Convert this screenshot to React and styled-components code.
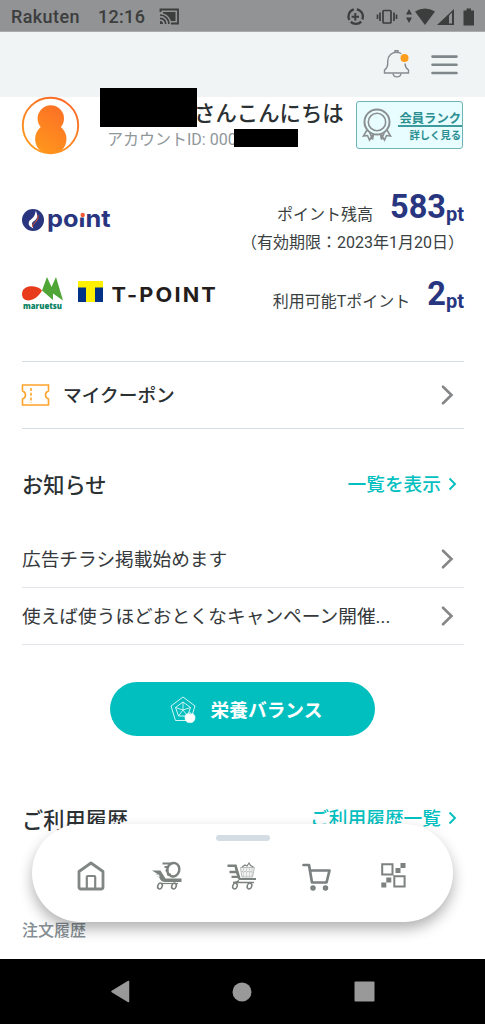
import React from 'react';
import styled, { createGlobalStyle } from 'styled-components';

const GlobalStyle = createGlobalStyle`
  * {
    box-sizing: border-box;
  }
  body {
    margin: 0;
    background: #fff;
    color: #2b3033;
    font-family: Roboto, "Noto Sans CJK JP", sans-serif;
  }
  svg {
    display: block;
    flex: none;
    overflow: visible;
  }
`;

const Screen = styled.div`
  width: 485px;
  height: 1024px;
  display: flex;
  flex-direction: column;
  overflow: hidden;
`;

const StatusBar = styled.div`
  height: 32px;
  flex: none;
  display: flex;
  align-items: center;
  padding: 2px 8px 0 11px;
  background: #929395;
  border-bottom: 1px solid #a9acad;
  color: #3c3d3d;
  font-size: 18px;
  font-weight: 500;
`;

const Carrier = styled.span`
  width: 87px;
  letter-spacing: 0.4px;
`;

const Clock = styled.span`
  flex: 1;
  display: flex;
  align-items: center;
  gap: 14px;
  letter-spacing: 0.3px;
`;

const Header = styled.header`
  height: 65px;
  flex: none;
  display: flex;
  align-items: center;
  justify-content: flex-end;
  gap: 20px;
  padding-right: 27px;
  background: #f0f4f5;
`;

const Main = styled.main`
  flex: 1;
  min-height: 0;
  padding: 0 21px 0 22px;
`;

const User = styled.section`
  height: 58px;
  display: flex;
`;

const UserText = styled.div`
  flex: 1;
  padding-left: 21px;
`;

const Greeting = styled.div`
  position: relative;
  height: 33px;
  padding-left: 94px;
  font-size: 21.4px;
  line-height: 33px;
  font-weight: 500;
  white-space: nowrap;
`;

const Account = styled.div`
  display: flex;
  align-items: center;
  height: 18px;
  padding-left: 7px;
  font-size: 16px;
  line-height: 20px;
  color: #90979b;
  white-space: nowrap;
`;

const AccountText = styled.span`
  padding-top: 2px;
`;

const NameMask = styled.span`
  position: absolute;
  left: 0;
  top: -9px;
  width: 97px;
  height: 39px;
  background: #000;
`;

const IdMask = styled.span`
  width: 64px;
  height: 18px;
  margin: -2px 0 0 -3px;
  background: #000;
  z-index: 1;
`;

const Rank = styled.div`
  width: 107px;
  height: 48px;
  margin: 4px 1px 0 -1px;
  display: flex;
  align-items: center;
  padding-left: 5px;
  background: #e7fdff;
  border: 1px solid #6fb3b6;
  border-radius: 3px;
  color: #2b8f92;
  font-weight: 700;
`;

const RankText = styled.div`
  width: 64px;
  margin-left: 6px;
  text-align: right;
  white-space: nowrap;
`;

const RankTitle = styled.div`
  height: 19px;
  padding-right: 1px;
  font-size: 12.3px;
  line-height: 22px;
  border-bottom: 2px solid #3d9b9d;
  margin-top: 2px;
`;

const RankLink = styled.div`
  height: 17px;
  padding-right: 1px;
  font-size: 10.3px;
  line-height: 17px;
`;

const Points = styled.section`
  height: 206px;
  padding-top: 32px;
`;

const PointRow = styled.div`
  height: ${(p) => p.$height}px;
  display: flex;
  justify-content: space-between;
  align-items: flex-start;
`;

const Logos = styled.div`
  display: flex;
  align-items: center;
  gap: 15px;
  padding-top: ${(p) => p.$top}px;
`;

const Balance = styled.div`
  display: flex;
  align-items: baseline;
  height: 40px;
  line-height: 40px;
`;

const Label = styled.span`
  font-size: 16px;
  color: #3a3f42;
  position: relative;
  top: 2px;
`;

const Amount = styled.span`
  margin-left: 17px;
  font-size: 32.5px;
  font-weight: 700;
  color: #28367f;
`;

const Unit = styled.span`
  position: relative;
  top: 3px;
  font-size: 20px;
  font-weight: 700;
  color: #28367f;
`;

const Expiry = styled.div`
  height: 43px;
  font-size: 16px;
  line-height: 24px;
  text-align: right;
  color: #3a3f42;
`;

const Coupon = styled.section`
  height: 68px;
  display: flex;
  align-items: center;
  padding-right: 10px;
  border-top: 1px solid #d3dfe5;
  border-bottom: 1px solid #d3dfe5;
  font-size: 18.7px;
  font-weight: 500;
`;

const CouponTitle = styled.span`
  flex: 1;
  padding: 0 0 4px 13px;
`;

const SectionHead = styled.div`
  height: ${(p) => p.$height}px;
  display: flex;
  justify-content: space-between;
  align-items: center;
  padding-top: ${(p) => p.$top || 0}px;
`;

const Title = styled.h2`
  margin: 0;
  font-size: 21.2px;
  font-weight: 500;
`;

const More = styled.a`
  display: flex;
  align-items: center;
  gap: 7px;
  padding-right: 7px;
  font-size: 18.7px;
  font-weight: 500;
  color: #04bfbf;
`;

const MoreText = styled.span`
  padding-bottom: 3px;
`;

const NewsRow = styled.div`
  height: 57px;
  display: flex;
  justify-content: space-between;
  align-items: center;
  padding-right: 10px;
  border-bottom: 1px solid #e2e6ea;
  font-size: 18.7px;
  color: #36393b;
`;

const NewsText = styled.span`
  padding-bottom: 3px;
`;

const NutritionButton = styled.button`
  width: 265px;
  height: 54px;
  margin: 37px auto 0 88px;
  padding: 1px 0 0 7px;
  display: flex;
  align-items: center;
  justify-content: center;
  gap: 14px;
  border: 0;
  border-radius: 27px;
  background: #02bfbf;
  color: #fff;
  font: inherit;
  font-size: 18.7px;
  font-weight: 700;
`;

const ButtonText = styled.span`
  padding-bottom: 3px;
`;

const History = styled.section`
  padding-top: 54px;
`;

const SubTitle = styled.div`
  margin-top: 73px;
  font-size: 16px;
  line-height: 24px;
  font-weight: 500;
  color: #858e93;
`;

const Dock = styled.nav`
  position: absolute;
  left: 32px;
  top: 824px;
  width: 421px;
  height: 98px;
  border-radius: 49px;
  background: #fff;
  box-shadow: 0 7px 14px rgba(0, 0, 0, 0.3);
`;

const Handle = styled.div`
  width: 54px;
  height: 6px;
  margin: 11px auto 0;
  border-radius: 3px;
  background: #d4dde3;
`;

const DockIcons = styled.div`
  display: grid;
  grid-template-columns: repeat(5, 75.5px);
  justify-content: center;
  justify-items: center;
  align-items: center;
  height: 69px;
  padding-right: 1px;
`;

const SystemNav = styled.div`
  height: 65px;
  flex: none;
  display: grid;
  grid-template-columns: repeat(3, 122px);
  justify-content: center;
  justify-items: center;
  align-items: center;
  padding-right: 1px;
  background: #000;
`;

const Chevron = ({ small }) =>
  small ? (
    <svg width="9" height="14" viewBox="0 0 9 14" fill="none" stroke="#04bfbf" strokeWidth="1.900">
      <path d="M1.500 1.500 7 7l-5.500 5.500" />
    </svg>
  ) : (
    <svg width="13" height="20" viewBox="0 0 13 20" fill="none" stroke="#848687" strokeWidth="2.600" strokeLinecap="round">
      <path d="m2 1.700 8.500 8.300-8.500 8.300" />
    </svg>
  );

const CastIcon = () => (
  <svg width="21" height="17" viewBox="0 0 21 17" fill="none" stroke="#3c3d3d">
    <path d="M1.500 4V1.500h17.500v14H12" strokeWidth="1.800" />
    <path d="M4 4h12.500v9H12C10 8 7 6 4 5.500Z" fill="#3c3d3d" stroke="none" />
    <path d="M1 7a9 9 0 0 1 9 9M1 10.300A5.700 5.700 0 0 1 6.700 16" strokeWidth="1.700" />
    <path d="M1 13a3 3 0 0 1 3 3H1Z" fill="#3c3d3d" stroke="none" />
  </svg>
);

const StatusIcons = () => (
  <svg width="131" height="20" viewBox="0 0 131 20" fill="#3c3d3d" stroke="none">
    <g fill="none" stroke="#3c3d3d" strokeWidth="2.300">
      <path d="M7.800 2.400A7.400 7.400 0 0 0 3.300 13M4.800 14.800A7.400 7.400 0 0 0 15.200 14.600M10.800 2.300A7.400 7.400 0 0 1 16.400 12.500" />
      <path d="M9.300 6v7.400M5.600 9.700H13" strokeWidth="2" />
    </g>
    <g fill="none" stroke="#3c3d3d" strokeWidth="1.700">
      <rect x="37" y="3.500" width="8" height="12.500" rx="1" />
      <path d="M34 5.500v8.500M31.500 7.500v4.500M48 5.500v8.500M50.500 7.500v4.500" />
    </g>
    <path d="m60 7.500 3-5.500 3 5.500zM60 10.500l3 5.500 3-5.500z" />
    <path d="M69 4.500Q79-1.500 89 4.500L79 18Z" />
    <path d="M91 18 108 2v16Z" />
    <path d="M103 8.500 106 5.500v11h-3z" fill="#929395" />
    <path d="M117.500 3.500h3V1.500h4.500v2h3V18.500h-10.500z" />
  </svg>
);

const BellIcon = () => (
  <svg width="28" height="29" viewBox="0 0 28 29" fill="none" stroke="#858b90" strokeWidth="1.400">
    <path d="M1.500 23v-3c2-1.500 3.200-3 3.200-6V11a8.700 8.700 0 0 1 17.400 0v3c0 3 1.200 4.500 3.400 6v3Z" />
    <path d="M10 23.500c.5 4.500 7.500 4.500 8 0M12 2V.8h3V2" />
    <circle cx="21.500" cy="8" r="5.500" fill="#f0f4f5" stroke="none" />
    <circle cx="21.500" cy="8" r="4" fill="#ff9c1b" stroke="none" />
  </svg>
);

const MenuIcon = () => (
  <svg width="27" height="20" viewBox="0 0 27 20" stroke="#7f878b" strokeWidth="2.600" strokeLinecap="round">
    <path d="M1.500 1.600h24M1.500 9.800h24M1.500 18h24" />
  </svg>
);

const Avatar = () => (
  <svg width="57" height="58" viewBox="0 0 57 58">
    <defs>
      <linearGradient id="avatar" gradientUnits="userSpaceOnUse" x1="45" y1="5" x2="15" y2="52">
        <stop offset="0" stopColor="#fb6a26" />
        <stop offset="1" stopColor="#ff961d" />
      </linearGradient>
      <clipPath id="face">
        <circle cx="28.500" cy="28.500" r="28" />
      </clipPath>
    </defs>
    <g fill="url(#avatar)" clipPath="url(#face)">
      <circle cx="28.800" cy="21.500" r="13.200" />
      <circle cx="28.800" cy="42" r="15.700" />
    </g>
    <circle cx="28.500" cy="28.500" r="27.700" fill="none" stroke="url(#avatar)" strokeWidth="1.900" />
  </svg>
);

const RankIcon = () => (
  <svg width="30" height="34" viewBox="0 0 30 34" fill="none" stroke="#8b8f91" strokeWidth="1.600">
    <circle cx="15" cy="14" r="12.500" strokeWidth="2" />
    <circle cx="15" cy="14" r="8.700" />
    <path d="M5 22 1.500 28l4-.5 2 4.500 4-6M7.500 24l3 7.500M11.500 26l-1 5.500M25 22l3.500 6-4-.5-2 4.500-4-6M22.500 24l-3 7.500M18.500 26l1 5.500" />
  </svg>
);

const DPointLogo = () => (
  <svg width="90" height="27" viewBox="0 0 90 27">
    <circle cx="11" cy="11" r="11" fill="#29367f" />
    <path d="M14 4q2 5-3 8-3 2-1 6-4-2-2-6 5-3 6-8Z" fill="#fff" stroke="#fff" strokeWidth="1.300" />
    <path d="M16 6q1 4-3 7.500-3 2-2.500 4.500" fill="none" stroke="#f15a33" strokeWidth="1" />
    <text x="25" y="18" fontFamily="Inter" fontSize="24" fontWeight="700" fill="#29367f" textLength="63.500" lengthAdjust="spacingAndGlyphs">point</text>
    <rect x="57" y="-2" width="7.300" height="10.500" fill="#fff" />
    <circle cx="60.700" cy="6" r="2.200" fill="#f15a33" />
  </svg>
);

const MaruetsuLogo = () => (
  <svg width="41" height="34" viewBox="0 0 41 34">
    <path d="M20 13.500C14 7 0 8 0 17c0 10 14 8 20-3.500Z" fill="#e83b1c" />
    <path d="M20 13.500 25 0l4.500 10L34 0l7 23.500-10-7v6.500Z" fill="#4fa637" />
    <text x="1" y="31.500" fontFamily="Open Sans" fontSize="8.500" fontWeight="800" fill="#078262" textLength="39" lengthAdjust="spacingAndGlyphs">maruetsu</text>
  </svg>
);

const TPointLogo = () => (
  <svg width="140" height="26" viewBox="0 0 140 26">
    <path d="M0 0h25v21H0z" fill="#fff000" />
    <path d="M0 6.500h8V21H0zM17 6.500h8V21h-8z" fill="#003288" />
    <text x="33.500" y="21" fontFamily="Inter" fontSize="20" fontWeight="700" letterSpacing="2" fill="#241d1c" textLength="106.500" lengthAdjust="spacingAndGlyphs">T-POINT</text>
  </svg>
);

const CouponIcon = () => (
  <svg width="28" height="22" viewBox="0 0 28 22" fill="none" stroke="#ffa42d" strokeWidth="1.600">
    <path d="M.5 1h26v6q-3 1-3 4t3 4v6H.5v-6q3-1 3-4t-3-4Z" />
    <path d="M9 4v15" strokeDasharray="3 1.800" />
  </svg>
);

const NutritionIcon = () => (
  <svg width="27" height="28" viewBox="0 0 27 28" fill="none" stroke="#d5f5f5" strokeWidth="1">
    <path d="M13 1 25 10l-4.500 14.500h-15L1 10Z M13 6l7.500 5.500-3 8.500h-9l-3-8.500Z" />
    <path d="M13 6v8l7.500-2.500M13 14l4.500 6M13 14l-4.500 6M13 14 5.500 11.500" strokeWidth=".9" />
    <path d="M20 18.300c2-1.500 5-.5 5 3.200 0 3-2 5.500-5 5-3 .5-5-2-5-5 0-3.700 3-4.700 5-3.200Z" fill="#fff" stroke="#fff" strokeWidth=".6" />
    <path d="M20 18.500v-2.500" stroke="#fff" />
  </svg>
);

const HomeIcon = () => (
  <svg width="28" height="30" viewBox="0 0 28 30" fill="none" stroke="#818784" strokeWidth="2.800" strokeLinejoin="round">
    <path d="M2 10.500 14 2l12 8.500V26q0 2-2 2H4q-2 0-2-2Z" />
    <path d="M9.800 28V16q0-1 1-1h6.400q1 0 1 1v12" strokeWidth="2.200" />
  </svg>
);

const FastCartIcon = () => (
  <svg width="30" height="28" viewBox="0 0 30 28" fill="none" stroke="#7b827e" strokeWidth="2">
    <path d="M0 8.500h8.500l5 8H29.500v3.500H13c-4 0-5-3-6-5H4l4-.5-1.500-2H3l2.500-.5z" fill="#7b827e" stroke="none" />
    <ellipse cx="21.300" cy="7.700" rx="6" ry="6.800" transform="rotate(15 21.300 7.700)" strokeWidth="2.500" />
    <path d="M10.500 1.500h9M12.500 5h4M13.500 8.500h3M15 12.500h4" strokeWidth="2" />
    <path d="M9 21.500h17" strokeWidth="1.200" />
    <ellipse cx="8" cy="24" rx="2.200" ry="3" transform="rotate(20 8 24)" strokeWidth="1.600" />
    <ellipse cx="22" cy="24" rx="2.200" ry="3" transform="rotate(20 22 24)" strokeWidth="1.600" />
  </svg>
);

const BasketCartIcon = () => (
  <svg width="30" height="28" viewBox="0 0 30 28" fill="none" stroke="#7b827e" strokeWidth="2">
    <path d="M.5 2.500h9l4 13.500H29v2H12L10.500 16H4.500v-2.300H10L9 11.200H2.500V8.800h6L7.500 5H.5z" fill="#7b827e" stroke="none" />
    <path d="M13.500 5.500h14L25.500 15H15Z" fill="#eff0ef" stroke="#b7bbb9" strokeWidth="1" />
    <path d="M16.500 6.500v8M19.500 6.500v8M22.500 6.500v8M25 6.500v8M14 9.500h12" stroke="#b9bdbb" strokeWidth=".8" strokeDasharray="2 1" />
    <path d="m15 5 3-2 2 1 2-3 1.500 2.500 3 1.500" strokeWidth="1.200" />
    <path d="M12 18.500q-2 2-6 2h21" strokeWidth="1.300" />
    <ellipse cx="8" cy="24" rx="2.200" ry="3" transform="rotate(20 8 24)" strokeWidth="1.500" />
    <ellipse cx="22.500" cy="24" rx="2.200" ry="3" transform="rotate(20 22.500 24)" strokeWidth="1.500" />
  </svg>
);

const CartIcon = () => (
  <svg width="31" height="26" viewBox="0 0 31 26" fill="none" stroke="#7b8080" strokeWidth="2.700" strokeLinecap="round" strokeLinejoin="round">
    <path d="M1.500 2H7l3 17.500h14.500L27.500 7.500H8.500" />
    <circle cx="11" cy="25" r="1.500" strokeWidth="2.500" />
    <circle cx="23.500" cy="25" r="1.500" strokeWidth="2.500" />
  </svg>
);

const QrIcon = () => (
  <svg width="25" height="25" viewBox="0 0 25 25" fill="#7d8180">
    <path d="M1.200 1.200h10.300v10.300H1.200zM13.300 13.300h10.300v10.300H13.300z" fill="none" stroke="#7d8180" strokeWidth="2" />
    <path d="M19.500 0h5v5h-5zM14.500 5h5v5h-5zM5.300 14.500h5v5h-5zM.3 19.500h5v5h-5z" />
  </svg>
);

const news = ['広告チラシ掲載始めます', '使えば使うほどおとくなキャンペーン開催...'];

const App = () => {
  return (
    <Screen>
      <GlobalStyle />
      <StatusBar>
        <Carrier>Rakuten</Carrier>
        <Clock>
          12:16
          <CastIcon />
        </Clock>
        <StatusIcons />
      </StatusBar>
      <Header>
        <BellIcon />
        <MenuIcon />
      </Header>
      <Main>
        <User>
          <Avatar />
          <UserText>
            <Greeting>
              <NameMask />
              さんこんにちは
            </Greeting>
            <Account>
              <AccountText>アカウントID: 000</AccountText>
              <IdMask />
            </Account>
          </UserText>
          <Rank>
            <RankIcon />
            <RankText>
              <RankTitle>会員ランク</RankTitle>
              <RankLink>詳しく見る</RankLink>
            </RankText>
          </Rank>
        </User>
        <Points>
          <PointRow $height={44}>
            <Logos $top={22}>
              <DPointLogo />
            </Logos>
            <Balance>
              <Label>ポイント残高</Label>
              <Amount>583</Amount>
              <Unit>pt</Unit>
            </Balance>
          </PointRow>
          <Expiry>（有効期限：2023年1月20日）</Expiry>
          <PointRow $height={87}>
            <Logos $top={3}>
              <MaruetsuLogo />
              <TPointLogo />
            </Logos>
            <Balance>
              <Label>利用可能Tポイント</Label>
              <Amount>2</Amount>
              <Unit>pt</Unit>
            </Balance>
          </PointRow>
        </Points>
        <Coupon>
          <CouponIcon />
          <CouponTitle>マイクーポン</CouponTitle>
          <Chevron />
        </Coupon>
        <SectionHead $height={102} $top={7}>
          <Title>お知らせ</Title>
          <More>
            <MoreText>一覧を表示</MoreText>
            <Chevron small />
          </More>
        </SectionHead>
        {news.map((text) => (
          <NewsRow key={text}>
            <NewsText>{text}</NewsText>
            <Chevron />
          </NewsRow>
        ))}
        <NutritionButton>
          <NutritionIcon />
          <ButtonText>栄養バランス</ButtonText>
        </NutritionButton>
        <History>
          <SectionHead $height={56}>
            <Title>ご利用履歴</Title>
            <More>
              <MoreText>ご利用履歴一覧</MoreText>
              <Chevron small />
            </More>
          </SectionHead>
          <SubTitle>注文履歴</SubTitle>
        </History>
      </Main>
      <Dock>
        <Handle />
        <DockIcons>
          <HomeIcon />
          <FastCartIcon />
          <BasketCartIcon />
          <CartIcon />
          <QrIcon />
        </DockIcons>
      </Dock>
      <SystemNav>
        <svg width="19" height="23" viewBox="0 0 19 23">
          <path d="M17.500 1.500v20L1 11.500Z" fill="#999" stroke="#999" strokeWidth="1.500" strokeLinejoin="round" />
        </svg>
        <svg width="20" height="20">
          <circle cx="10" cy="10" r="9.500" fill="#999" />
        </svg>
        <svg width="21" height="21">
          <rect x=".5" y=".5" width="20" height="20" rx="1" fill="#999" />
        </svg>
      </SystemNav>
    </Screen>
  );
};

export default App;
